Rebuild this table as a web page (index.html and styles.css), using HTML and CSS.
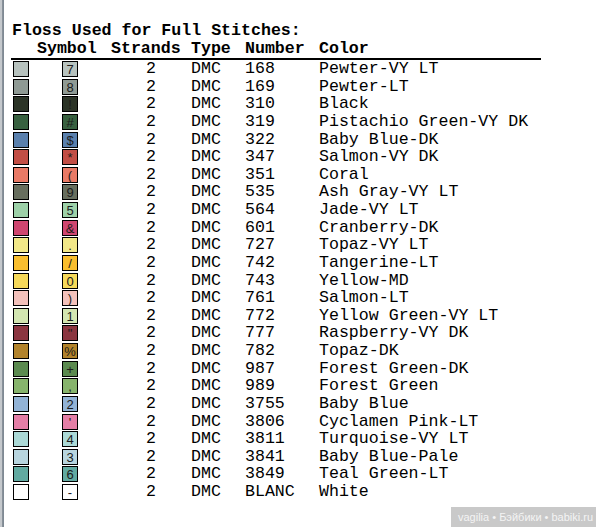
FILE: index.html
```html
<!DOCTYPE html>
<html>
<head>
<meta charset="utf-8">
<link rel="stylesheet" href="styles.css">
</head>
<body>
<div class="frame"></div>
<div class="page">
  <div class="title">Floss Used for Full Stitches:</div>
  <div class="table">
    <div class="row head">
      <div></div><div>Symbol</div><div>Strands</div><div>Type</div><div>Number</div><div>Color</div>
    </div>
    <div class="row"><div><span class="sw" style="background:#b7c2be"></span></div><div><span class="sym" style="background:#b7c2be">7</span></div><div class="n">2</div><div>DMC</div><div>168</div><div>Pewter-VY LT</div></div>
    <div class="row"><div><span class="sw" style="background:#8f9a94"></span></div><div><span class="sym" style="background:#8f9a94">8</span></div><div class="n">2</div><div>DMC</div><div>169</div><div>Pewter-LT</div></div>
    <div class="row"><div><span class="sw" style="background:#2c3427"></span></div><div><span class="sym" style="background:#2c3427">!</span></div><div class="n">2</div><div>DMC</div><div>310</div><div>Black</div></div>
    <div class="row"><div><span class="sw" style="background:#386140"></span></div><div><span class="sym" style="background:#386140">#</span></div><div class="n">2</div><div>DMC</div><div>319</div><div>Pistachio Green-VY DK</div></div>
    <div class="row"><div><span class="sw" style="background:#5a80ad"></span></div><div><span class="sym" style="background:#5a80ad">$</span></div><div class="n">2</div><div>DMC</div><div>322</div><div>Baby Blue-DK</div></div>
    <div class="row"><div><span class="sw" style="background:#c24e45"></span></div><div><span class="sym" style="background:#c24e45">*</span></div><div class="n">2</div><div>DMC</div><div>347</div><div>Salmon-VY DK</div></div>
    <div class="row"><div><span class="sw" style="background:#e97a66"></span></div><div><span class="sym" style="background:#e97a66">(</span></div><div class="n">2</div><div>DMC</div><div>351</div><div>Coral</div></div>
    <div class="row"><div><span class="sw" style="background:#676e5e"></span></div><div><span class="sym" style="background:#676e5e">9</span></div><div class="n">2</div><div>DMC</div><div>535</div><div>Ash Gray-VY LT</div></div>
    <div class="row"><div><span class="sw" style="background:#9dd1a8"></span></div><div><span class="sym" style="background:#9dd1a8">5</span></div><div class="n">2</div><div>DMC</div><div>564</div><div>Jade-VY LT</div></div>
    <div class="row"><div><span class="sw" style="background:#cf4670"></span></div><div><span class="sym" style="background:#cf4670">&amp;</span></div><div class="n">2</div><div>DMC</div><div>601</div><div>Cranberry-DK</div></div>
    <div class="row"><div><span class="sw" style="background:#f2e888"></span></div><div><span class="sym" style="background:#f2e888">.</span></div><div class="n">2</div><div>DMC</div><div>727</div><div>Topaz-VY LT</div></div>
    <div class="row"><div><span class="sw" style="background:#f9be2e"></span></div><div><span class="sym" style="background:#f9be2e">/</span></div><div class="n">2</div><div>DMC</div><div>742</div><div>Tangerine-LT</div></div>
    <div class="row"><div><span class="sw" style="background:#f6d95a"></span></div><div><span class="sym" style="background:#f6d95a">0</span></div><div class="n">2</div><div>DMC</div><div>743</div><div>Yellow-MD</div></div>
    <div class="row"><div><span class="sw" style="background:#f3c1bb"></span></div><div><span class="sym" style="background:#f3c1bb">)</span></div><div class="n">2</div><div>DMC</div><div>761</div><div>Salmon-LT</div></div>
    <div class="row"><div><span class="sw" style="background:#d3e6b1"></span></div><div><span class="sym" style="background:#d3e6b1">1</span></div><div class="n">2</div><div>DMC</div><div>772</div><div>Yellow Green-VY LT</div></div>
    <div class="row"><div><span class="sw" style="background:#8b3540"></span></div><div><span class="sym" style="background:#8b3540">"</span></div><div class="n">2</div><div>DMC</div><div>777</div><div>Raspberry-VY DK</div></div>
    <div class="row"><div><span class="sw" style="background:#b2832b"></span></div><div><span class="sym" style="background:#b2832b">%</span></div><div class="n">2</div><div>DMC</div><div>782</div><div>Topaz-DK</div></div>
    <div class="row"><div><span class="sw" style="background:#5b8a4f"></span></div><div><span class="sym" style="background:#5b8a4f">+</span></div><div class="n">2</div><div>DMC</div><div>987</div><div>Forest Green-DK</div></div>
    <div class="row"><div><span class="sw" style="background:#87b46c"></span></div><div><span class="sym" style="background:#87b46c">,</span></div><div class="n">2</div><div>DMC</div><div>989</div><div>Forest Green</div></div>
    <div class="row"><div><span class="sw" style="background:#92b3d6"></span></div><div><span class="sym" style="background:#92b3d6">2</span></div><div class="n">2</div><div>DMC</div><div>3755</div><div>Baby Blue</div></div>
    <div class="row"><div><span class="sw" style="background:#e47ea6"></span></div><div><span class="sym" style="background:#e47ea6">'</span></div><div class="n">2</div><div>DMC</div><div>3806</div><div>Cyclamen Pink-LT</div></div>
    <div class="row"><div><span class="sw" style="background:#abd9d6"></span></div><div><span class="sym" style="background:#abd9d6">4</span></div><div class="n">2</div><div>DMC</div><div>3811</div><div>Turquoise-VY LT</div></div>
    <div class="row"><div><span class="sw" style="background:#b8d5df"></span></div><div><span class="sym" style="background:#b8d5df">3</span></div><div class="n">2</div><div>DMC</div><div>3841</div><div>Baby Blue-Pale</div></div>
    <div class="row"><div><span class="sw" style="background:#62aaa1"></span></div><div><span class="sym" style="background:#62aaa1">6</span></div><div class="n">2</div><div>DMC</div><div>3849</div><div>Teal Green-LT</div></div>
    <div class="row"><div><span class="sw" style="background:#ffffff"></span></div><div><span class="sym" style="background:#ffffff">-</span></div><div class="n">2</div><div>DMC</div><div>BLANC</div><div>White</div></div>
  </div>
</div>
<div class="watermark">vagilia • Бэйбики • babiki.ru</div>
</body>
</html>
```

FILE: styles.css
```css
html, body {
  margin: 0;
  padding: 0;
  background: #ffffff;
}
body {
  position: relative;
  width: 596px;
  height: 527px;
  overflow: hidden;
  font-family: "Liberation Mono", "Courier New", monospace;
  font-size: 16.6px;
  color: #000;
}
.frame {
  position: absolute;
  left: 0;
  top: 0;
  width: 4px;
  height: 527px;
  background: linear-gradient(to right, #c4c8cc 0, #c4c8cc 2px, #8c949c 2px, #7a8590 4px);
}
.page {
  padding: 22px 0 0 11px;
}
.title {
  font-weight: bold;
  line-height: 18px;
  height: 18px;
  padding-left: 1px;
}
.table {
  width: 530px;
}
.row {
  display: grid;
  grid-template-columns: 26px 74px 80px 54px 74px 1fr;
  height: 17.625px;
  line-height: 18px;
  white-space: pre;
}
.row.head {
  font-weight: bold;
  height: 18px;
  border-bottom: 2px solid #000;
}
.row .n {
  padding-left: 35px;
}
.sw {
  display: block;
  width: 14px;
  height: 14px;
  border: 1px solid #000;
  margin: 1px 0 0 2px;
}
.sym {
  display: block;
  width: 14px;
  height: 14px;
  border: 1px solid #000;
  margin: 1px 0 0 25px;
  font-family: "Liberation Sans", Arial, sans-serif;
  font-size: 13px;
  line-height: 15px;
  text-align: center;
  color: #1a1a1a;
}
.watermark {
  position: absolute;
  right: 0;
  bottom: 0;
  width: 138px;
  height: 20px;
  padding-left: 7px;
  background: #c9c9c9;
  color: #f4f4f4;
  font-family: "Liberation Sans", Arial, sans-serif;
  font-size: 11px;
  line-height: 20px;
}
```
